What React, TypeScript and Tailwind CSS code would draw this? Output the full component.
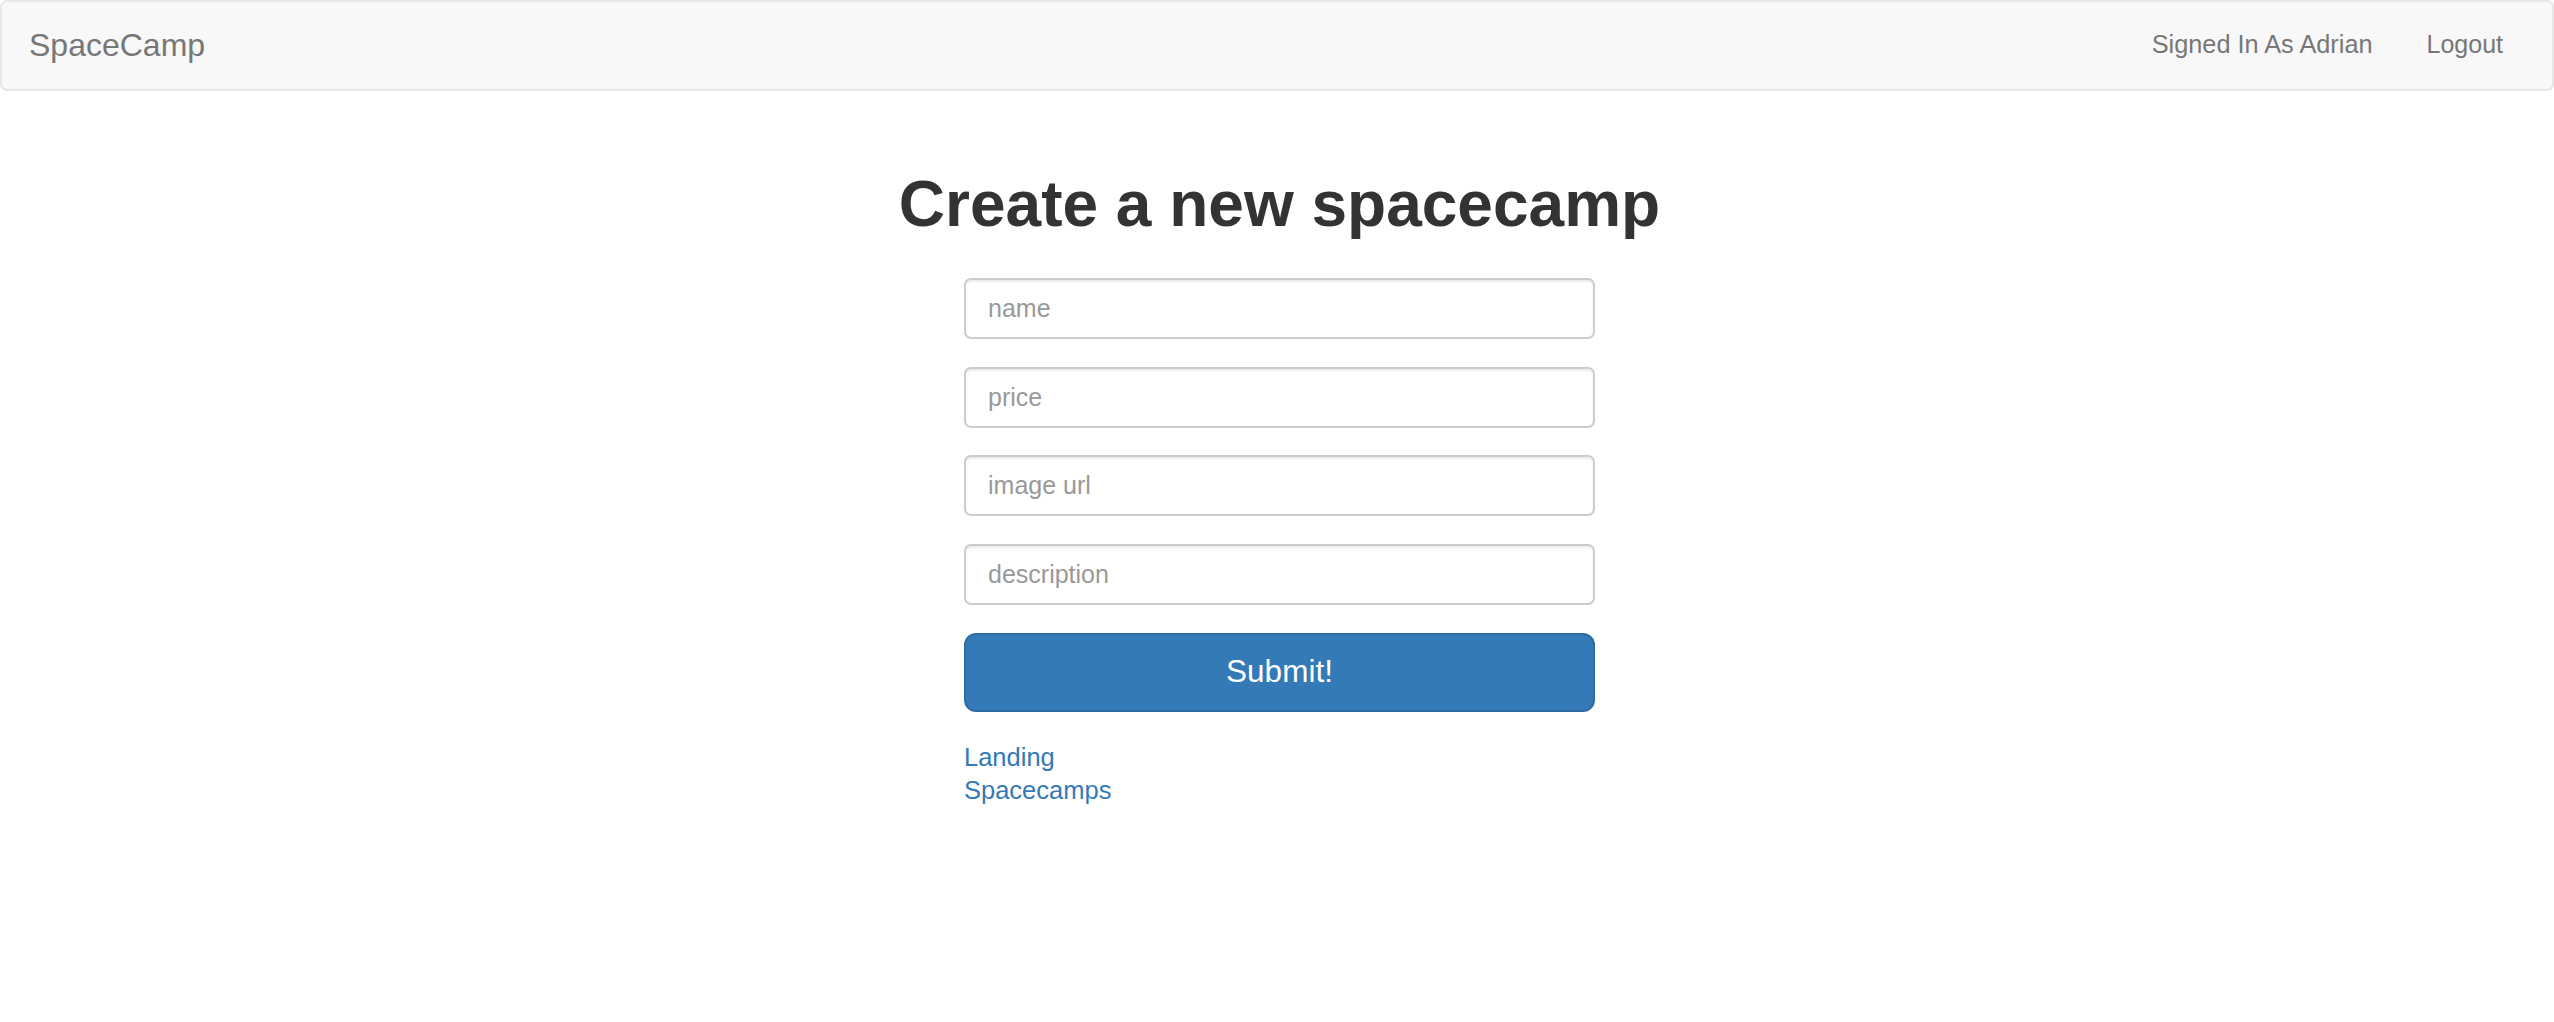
import React from "react";

export default function App() {
  const fields = ["name", "price", "image url", "description"];
  return (
    <div
      className="min-h-screen bg-white"
      style={{ fontFamily: '"Liberation Sans", Arial, Helvetica, sans-serif' }}
    >
      <nav className="h-[91px] bg-[#f8f8f8] border-2 border-[#e7e7e7] rounded-[7px] flex items-center justify-between pl-[27px] pr-[49px]">
        <a href="#" className="text-[32px] leading-[40px] text-[#777] -mt-[2px]">
          SpaceCamp
        </a>
        <div className="flex items-center gap-[54px] text-[25px] leading-[36px] text-[#777] -mt-[4px]">
          <a href="#" className="text-[25.3px]">Signed In As Adrian</a>
          <a href="#">Logout</a>
        </div>
      </nav>

      <h1 className="mt-[78px] text-center text-[64px] leading-[70px] font-bold text-[#333] pl-[5px]">
        Create a new spacecamp
      </h1>

      <div className="flex justify-center pl-[5px] mt-[39px]">
        <form className="w-[631px] flex flex-col" onSubmit={(e) => e.preventDefault()}>
          <div className="flex flex-col gap-[27.5px]">
            {fields.map((f) => (
              <input
                key={f}
                type="text"
                placeholder={f}
                className="h-[61px] w-full rounded-[7px] border-2 border-[#cccccc] bg-white px-[22px] text-[25px] text-[#555] placeholder:text-[#999] shadow-[inset_0_2px_2px_rgba(0,0,0,0.075)] outline-none"
              />
            ))}
          </div>
          <button
            type="submit"
            className="mt-[28px] h-[79px] w-full rounded-[12px] border-2 border-[#2e6da4] bg-[#337ab7] text-[31.5px] text-white"
          >
            Submit!
          </button>
          <div className="mt-[29px] flex flex-col items-start text-[25.5px] leading-[33px] text-[#337ab7]">
            <a href="#">Landing</a>
            <a href="#">Spacecamps</a>
          </div>
        </form>
      </div>
    </div>
  );
}
